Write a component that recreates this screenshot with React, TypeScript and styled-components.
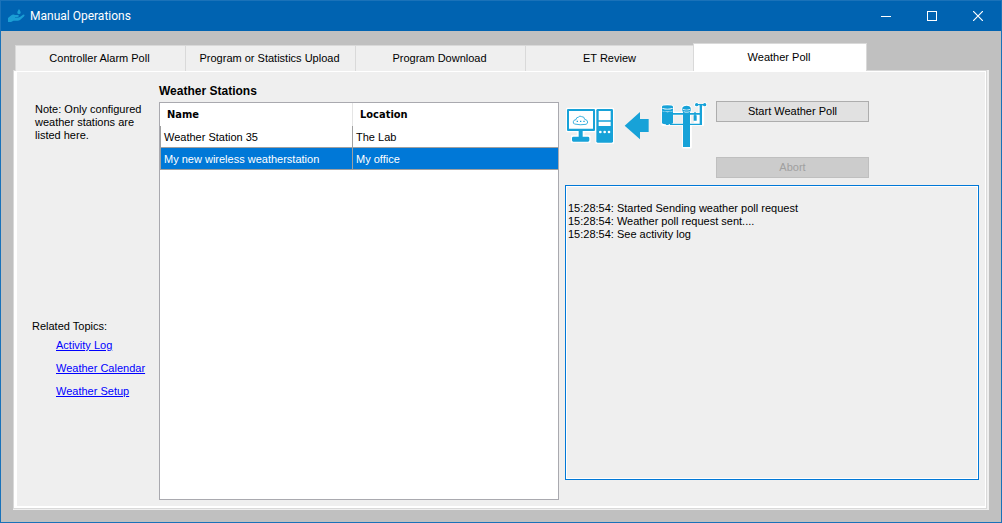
import React from "react";
import styled, { createGlobalStyle } from "styled-components";

const GlobalStyle = createGlobalStyle`
  * { box-sizing: border-box; }
  body {
    margin: 0;
    font-family: "Liberation Sans", Arial, sans-serif;
    font-size: 11px;
    line-height: 13px;
    color: #000;
  }
`;

const Window = styled.div`
  min-height: 100vh;
  display: flex;
  flex-direction: column;
  border: 1px solid #1a72b9;
  background: #c0c0c0;
`;

const TitleBar = styled.header`
  height: 30px;
  display: flex;
  align-items: center;
  gap: 5px;
  padding-left: 7px;
  background: #0063b1;
  color: #fff;
`;

const Title = styled.h1`
  flex: 1;
  margin: 0;
  font: 400 12px/16px Roboto, "Segoe UI", sans-serif;
`;

const WindowButtons = styled.div`
  display: flex;
`;

const WindowButton = styled.button`
  width: 46px;
  height: 30px;
  display: grid;
  place-items: center;
  padding: 0;
  border: 0;
  background: none;
  color: #fff;
`;

const Body = styled.main`
  flex: 1;
  display: flex;
  flex-direction: column;
  padding: 12px;
`;

const TabList = styled.div`
  display: flex;
  align-items: flex-end;
  height: 28px;
  padding-left: 2px;
`;

const Tab = styled.button<{ $active?: boolean }>`
  position: relative;
  z-index: ${(p) => (p.$active ? 1 : 0)};
  flex: 0 1 ${(p) => (p.$active ? 174 : 170)}px;
  height: ${(p) => (p.$active ? 28 : 26)}px;
  margin-left: ${(p) => (p.$active ? -2 : 0)}px;
  padding: 0 2px 0 0;
  border: solid #d9d9d9;
  border-width: 1px ${(p) => (p.$active ? 1 : 0)}px 0 1px;
  background: ${(p) => (p.$active ? "#fff" : "#efefef")};
  font: inherit;
  color: #000;
`;

const PanelEdge = styled.div`
  flex: 1;
  display: flex;
  margin-top: -1px;
  padding: 0 2px 1px 0;
  background: #efefef;
`;

const PanelFrame = styled.div`
  flex: 1;
  display: flex;
  padding: 1px 1px 2px 3px;
  border: 1px solid #d9d9d9;
  background: #fff;
`;

const Panel = styled.div`
  flex: 1;
  display: grid;
  grid-template-columns: 142px minmax(0, 400fr) minmax(0, 420fr);
  padding: 12px 6px 6px 0;
  background: #efefef;
`;

const Sidebar = styled.aside`
  padding: 19px 15px 0 15px;
`;

const Note = styled.p`
  margin: 0 0 178px;
  padding-left: 3px;
`;

const TopicsTitle = styled.h2`
  margin: 0 0 6px;
  font: inherit;
`;

const Topics = styled.ul`
  display: grid;
  gap: 10px;
  margin: 0;
  padding: 0 0 0 24px;
  list-style: none;
`;

const TopicLink = styled.a`
  color: #0000ff;
  white-space: nowrap;
  text-decoration: underline;
`;

const Stations = styled.section`
  display: flex;
  flex-direction: column;
`;

const StationsTitle = styled.h2`
  margin: 0 0 4px;
  font: 700 12px/14px "Liberation Sans", Arial, sans-serif;
`;

const Grid = styled.div`
  flex: 1;
  border: 1px solid #a9a9af;
  background: #fff;
`;

const Table = styled.table`
  width: 100%;
  border-collapse: separate;
  border-spacing: 0;
  table-layout: fixed;
`;

const HeadCell = styled.th`
  height: 23px;
  padding: 0 7px;
  border-right: 1px solid #e5e5e5;
  font: 700 11px/14px "DejaVu Sans Condensed", Tahoma, sans-serif;
  text-align: left;
  &:first-child { width: 193px; }
  &:last-child { border-right: 0; }
`;

const Row = styled.tr<{ $selected?: boolean }>`
  background: ${(p) => (p.$selected ? "#0078d7" : "#fff")};
  color: ${(p) => (p.$selected ? "#fff" : "#000")};
`;

const Cell = styled.td`
  height: 22px;
  padding: 2px 3px 0;
  border: solid #a0a0a0;
  border-width: 0 1px 1px 0;
  white-space: nowrap;
  &:first-child { border-left-width: 1px; }
  &:last-child { border-right: 0; }
`;

const PollArea = styled.section`
  display: flex;
  flex-direction: column;
  padding: 17px 0 20px 6px;
`;

const Controls = styled.div`
  display: flex;
  gap: 5px;
  margin-bottom: 7px;
`;

const Actions = styled.div`
  display: flex;
  flex-direction: column;
  gap: 35px;
  width: 153px;
`;

const ActionButton = styled.button`
  height: 21px;
  padding: 0;
  border: 1px solid #adadad;
  background: #e1e1e1;
  font: inherit;
  color: #000;
  &:disabled {
    border-color: #bfbfbf;
    background: #cccccc;
    color: #a0a0a0;
  }
`;

const Log = styled.textarea`
  flex: 1;
  width: 100%;
  min-height: 120px;
  padding: 16px 2px 2px;
  border: 1px solid #0078d7;
  border-radius: 0;
  box-shadow: inset 0 0 0 1px #fff;
  outline: 0;
  resize: none;
  background: #efefef;
  font: inherit;
  color: #000;
`;

const AppLogo = () => (
  <svg width="17" height="14" viewBox="0 0 17 14" fill="#1a9ed4" aria-hidden="true">
    <path d="M11 0C10.100 1.600 9.300 2.500 9.300 3.500a1.700 1.700 0 0 0 3.400 0C12.700 2.500 11.900 1.600 11 0Z" />
    <path d="M0 9 3 6.500Q5 5 7 6h3q1.200.2.800 1.200-.3.700-1.500.7H7v.7h3.300q1 0 2-.8l2.700-2q1.200-.6 1.500.2.300.7-.8 1.700L12 11q-1 .8-2.300.8H5.500L3 13H0Z" />
  </svg>
);

const PollDrawing = () => (
  <svg width="146" height="48" viewBox="15 33 438 144" role="img" aria-label="Weather station sends data to the computer">
    <g stroke="#fff" strokeWidth="7" strokeLinejoin="round" fill="#fff">
      <path d="M22 57h83v66H70v16h18v16H36v-16h18v-16H22ZM110 57h49v101h-49Z" />
      <path d="M307 50q15-9 31 0v19h30V52q11-10 23 0v19h28V48h10v56h-37v68h-22v-68h-62Z" />
      <circle cx="410" cy="44" r="4" /><circle cx="434" cy="44" r="4" />
    </g>
    <path d="M340 76h28v23h-28ZM393 76h9v23h-9Z" fill="#efefef" />
    <g fill="#17a2d8">
      <path fillRule="evenodd" d="M24 57h78q3 0 3 3v60q0 3-3 3H24q-3 0-3-3V60q0-3 3-3Zm3 6v53h72V63Z" />
      <path d="M56 123h12v17h16q4 0 4 4v7q0 4-4 4H40q-4 0-4-4v-7q0-4 4-4h16Z" />
      <rect x="109" y="57" width="50" height="101" rx="4" />
      <path d="M194 107 240 66v21h26v39h-26v22Z" />
      <path d="M306 50q0-4 16-4t17 4v50q-5 3-12 3l-2 2h-6l-2-2q-7 0-11-3Z" />
      <path d="M369 171V66l-2-4v-9q3-6 13-6t12 6v9l-2 4v105Z" />
      <path d="M337 69h85v5h-85Z M330 101h95v4h-95Z M419 47h7v58h-7Z M407 42h28v4h-28Z M403 66h4v10h3v16h-9V76h2Z" />
      <circle cx="410" cy="44" r="5" /><circle cx="434" cy="44" r="5" /><circle cx="423" cy="47" r="4" />
    </g>
    <path d="M43 102q-4-2-3-7 1-6 8-6 0-7 8-8 3-5 9-1 8-1 9 8 8 1 9 8 0 5-5 7-17 3-35-1Z" fill="#fff" stroke="#17a2d8" strokeWidth="2.500" />
    <path d="M50 94h4M60 94h4M70 94h4" stroke="#17a2d8" strokeWidth="4" />
    <path d="M116 63h36v28h-36ZM116 95h36v13h-36Z" fill="#fff" />
    <g fill="#fff">
      <circle cx="121" cy="126" r="4" /><circle cx="134" cy="126" r="4" /><circle cx="147" cy="126" r="4" />
      <path d="M307 54q15 5 31 0v2q-15 5-31 0ZM307 62q15 5 31 0v2q-15 5-31 0ZM369 57q11 4 21 0v2q-10 4-21 0ZM371 64q9 3 18 0v2q-9 3-18 0Z" />
    </g>
  </svg>
);

const tabs = ["Controller Alarm Poll", "Program or Statistics Upload", "Program Download", "ET Review", "Weather Poll"];
const topics = ["Activity Log", "Weather Calendar", "Weather Setup"];
const stations = [
  { name: "Weather Station 35", location: "The Lab", selected: false },
  { name: "My new wireless weatherstation", location: "My office", selected: true },
];
const log = [
  "15:28:54: Started Sending weather poll request",
  "15:28:54: Weather poll request sent....",
  "15:28:54: See activity log",
].join("\n");

export default function App() {
  return (
    <Window>
      <GlobalStyle />
      <TitleBar>
        <AppLogo />
        <Title>Manual Operations</Title>
        <WindowButtons>
          <WindowButton aria-label="Minimize">
            <svg width="10" height="10" stroke="currentColor" shapeRendering="crispEdges"><path d="M0 5.500h10" /></svg>
          </WindowButton>
          <WindowButton aria-label="Maximize">
            <svg width="10" height="10" fill="none" stroke="currentColor" shapeRendering="crispEdges"><path d="M.5.5h9v9h-9Z" /></svg>
          </WindowButton>
          <WindowButton aria-label="Close">
            <svg width="10" height="10" stroke="currentColor" strokeWidth="1.200"><path d="m0 0 10 10M10 0 0 10" /></svg>
          </WindowButton>
        </WindowButtons>
      </TitleBar>
      <Body>
        <TabList role="tablist">
          {tabs.map((label) => (
            <Tab key={label} role="tab" $active={label === "Weather Poll"} aria-selected={label === "Weather Poll"}>
              {label}
            </Tab>
          ))}
        </TabList>
        <PanelEdge>
          <PanelFrame>
            <Panel role="tabpanel" aria-label="Weather Poll">
              <Sidebar>
                <Note>Note: Only configured weather stations are listed here.</Note>
                <TopicsTitle>Related Topics:</TopicsTitle>
                <Topics>
                  {topics.map((topic) => (
                    <li key={topic}><TopicLink href="#">{topic}</TopicLink></li>
                  ))}
                </Topics>
              </Sidebar>
              <Stations>
                <StationsTitle id="stations">Weather Stations</StationsTitle>
                <Grid>
                  <Table aria-labelledby="stations">
                    <thead>
                      <tr><HeadCell>Name</HeadCell><HeadCell>Location</HeadCell></tr>
                    </thead>
                    <tbody>
                      {stations.map((s) => (
                        <Row key={s.name} $selected={s.selected}>
                          <Cell>{s.name}</Cell>
                          <Cell>{s.location}</Cell>
                        </Row>
                      ))}
                    </tbody>
                  </Table>
                </Grid>
              </Stations>
              <PollArea>
                <Controls>
                  <PollDrawing />
                  <Actions>
                    <ActionButton>Start Weather Poll</ActionButton>
                    <ActionButton disabled>Abort</ActionButton>
                  </Actions>
                </Controls>
                <Log readOnly aria-label="Poll log" value={log} />
              </PollArea>
            </Panel>
          </PanelFrame>
        </PanelEdge>
      </Body>
    </Window>
  );
}
